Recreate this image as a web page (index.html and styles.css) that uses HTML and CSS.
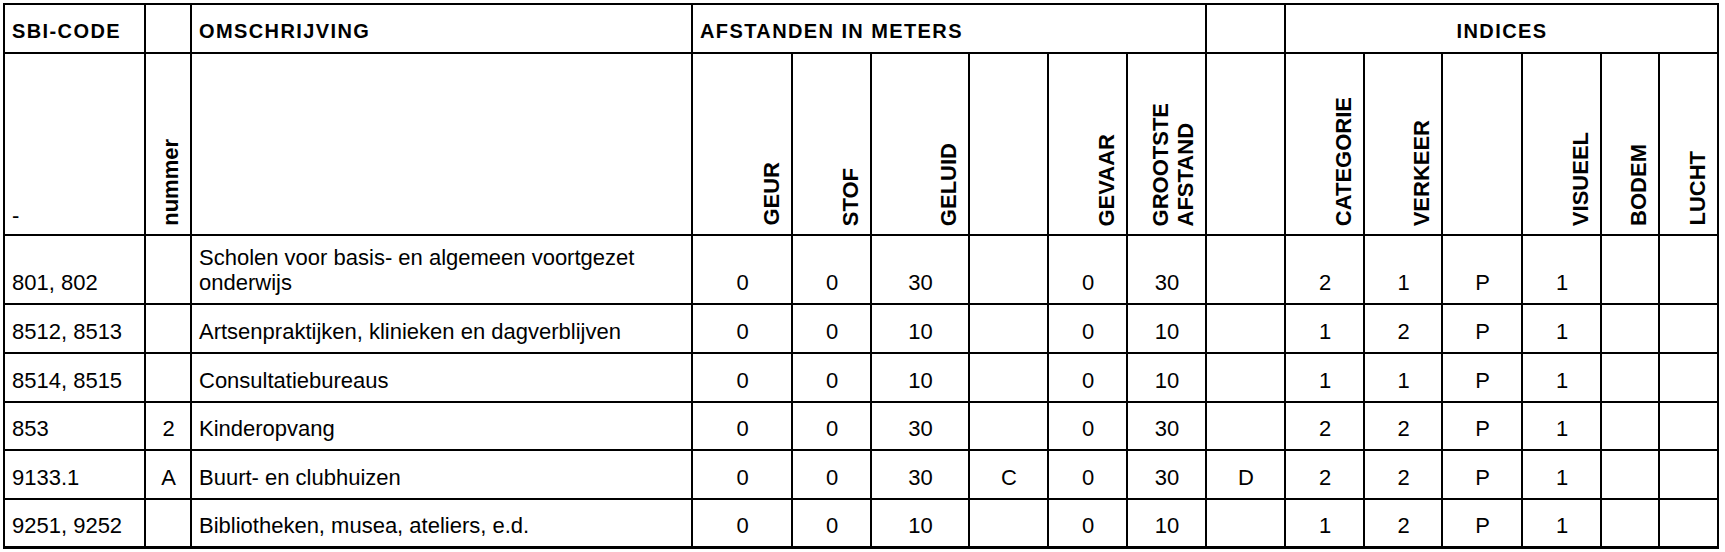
FILE: index.html
```html
<!DOCTYPE html>
<html lang="nl">
<head>
<meta charset="utf-8">
<title>Staat van bedrijfsactiviteiten</title>
<link rel="stylesheet" href="styles.css">
</head>
<body>
<div class="sheet">
<table class="staat">
  <colgroup>
    <col class="w-sbi"><col class="w-nr"><col class="w-oms">
    <col class="w-geur"><col class="w-stof"><col class="w-geluid"><col class="w-c"><col class="w-gevaar"><col class="w-groot">
    <col class="w-d"><col class="w-cat"><col class="w-verk"><col class="w-p"><col class="w-vis"><col class="w-bodem"><col class="w-lucht">
  </colgroup>
  <thead>
    <tr class="h1">
      <th class="tl">SBI-CODE</th>
      <th></th>
      <th class="tl">OMSCHRIJVING</th>
      <th class="tl" colspan="6">AFSTANDEN IN METERS</th>
      <th></th>
      <th class="tc" colspan="6">INDICES</th>
    </tr>
    <tr class="h2">
      <th class="dash">-</th>
      <th class="rot"><span>nummer</span></th>
      <th></th>
      <th class="rot"><span>GEUR</span></th>
      <th class="rot"><span>STOF</span></th>
      <th class="rot"><span>GELUID</span></th>
      <th></th>
      <th class="rot"><span>GEVAAR</span></th>
      <th class="rot"><span>GROOTSTE<br>AFSTAND</span></th>
      <th></th>
      <th class="rot"><span>CATEGORIE</span></th>
      <th class="rot"><span>VERKEER</span></th>
      <th></th>
      <th class="rot"><span>VISUEEL</span></th>
      <th class="rot"><span>BODEM</span></th>
      <th class="rot"><span>LUCHT</span></th>
    </tr>
  </thead>
  <tbody>
    <tr class="r-tall">
      <td class="tl">801, 802</td><td></td><td class="tl">Scholen voor basis- en algemeen voortgezet<br>onderwijs</td>
      <td>0</td><td>0</td><td>30</td><td></td><td>0</td><td>30</td><td></td><td>2</td><td>1</td><td>P</td><td>1</td><td></td><td></td>
    </tr>
    <tr class="r49">
      <td class="tl">8512, 8513</td><td></td><td class="tl">Artsenpraktijken, klinieken en dagverblijven</td>
      <td>0</td><td>0</td><td>10</td><td></td><td>0</td><td>10</td><td></td><td>1</td><td>2</td><td>P</td><td>1</td><td></td><td></td>
    </tr>
    <tr class="r49">
      <td class="tl">8514, 8515</td><td></td><td class="tl">Consultatiebureaus</td>
      <td>0</td><td>0</td><td>10</td><td></td><td>0</td><td>10</td><td></td><td>1</td><td>1</td><td>P</td><td>1</td><td></td><td></td>
    </tr>
    <tr class="r48">
      <td class="tl">853</td><td>2</td><td class="tl">Kinderopvang</td>
      <td>0</td><td>0</td><td>30</td><td></td><td>0</td><td>30</td><td></td><td>2</td><td>2</td><td>P</td><td>1</td><td></td><td></td>
    </tr>
    <tr class="r49">
      <td class="tl">9133.1</td><td>A</td><td class="tl">Buurt- en clubhuizen</td>
      <td>0</td><td>0</td><td>30</td><td>C</td><td>0</td><td>30</td><td>D</td><td>2</td><td>2</td><td>P</td><td>1</td><td></td><td></td>
    </tr>
    <tr class="r48">
      <td class="tl">9251, 9252</td><td></td><td class="tl">Bibliotheken, musea, ateliers, e.d.</td>
      <td>0</td><td>0</td><td>10</td><td></td><td>0</td><td>10</td><td></td><td>1</td><td>2</td><td>P</td><td>1</td><td></td><td></td>
    </tr>
  </tbody>
</table>
</div>
</body>
</html>
```
FILE: styles.css
```css
html, body {
  margin: 0;
  padding: 0;
  background: #fff;
}

.sheet {
  padding: 3px 0 0 3px;
}

.staat {
  border-collapse: collapse;
  table-layout: fixed;
  width: 1714px;
  font-family: "Liberation Sans", Arial, sans-serif;
  font-size: 22px;
  color: #000;
}

.staat th,
.staat td {
  border: 2px solid #000;
  padding: 0 6px 8px 7px;
  line-height: 25px;
  text-align: center;
  vertical-align: bottom;
  overflow: hidden;
  white-space: nowrap;
}

.staat th {
  font-weight: bold;
}

.staat tbody tr:last-child td {
  border-bottom-width: 3px;
}

.w-sbi { width: 141px; }
.w-nr { width: 46px; }
.w-oms { width: 501px; }
.w-geur { width: 100px; }
.w-stof { width: 79px; }
.w-geluid { width: 98px; }
.w-c { width: 79px; }
.w-gevaar { width: 79px; }
.w-groot { width: 79px; }
.w-d { width: 79px; }
.w-cat { width: 79px; }
.w-verk { width: 78px; }
.w-p { width: 80px; }
.w-vis { width: 79px; }
.w-bodem { width: 58px; }
.w-lucht { width: 59px; }

.h1 { height: 49px; }
.h2 { height: 182px; }
.r-tall { height: 69px; }
.r49 { height: 49px; }
.r48 { height: 48px; }

.h1 th {
  font-size: 20px;
  letter-spacing: 1.4px;
  padding-bottom: 8px;
}

.staat .tl { text-align: left; }
.staat .tc { text-align: center; }

.staat .dash {
  text-align: left;
  font-weight: normal;
  padding-bottom: 6px;
}

.staat .rot {
  text-align: right;
  padding: 0 7px 8px 0;
}

.rot span {
  display: inline-block;
  vertical-align: bottom;
  writing-mode: vertical-rl;
  transform: rotate(180deg);
  text-align: left;
  line-height: 25px;
  white-space: nowrap;
}
```
